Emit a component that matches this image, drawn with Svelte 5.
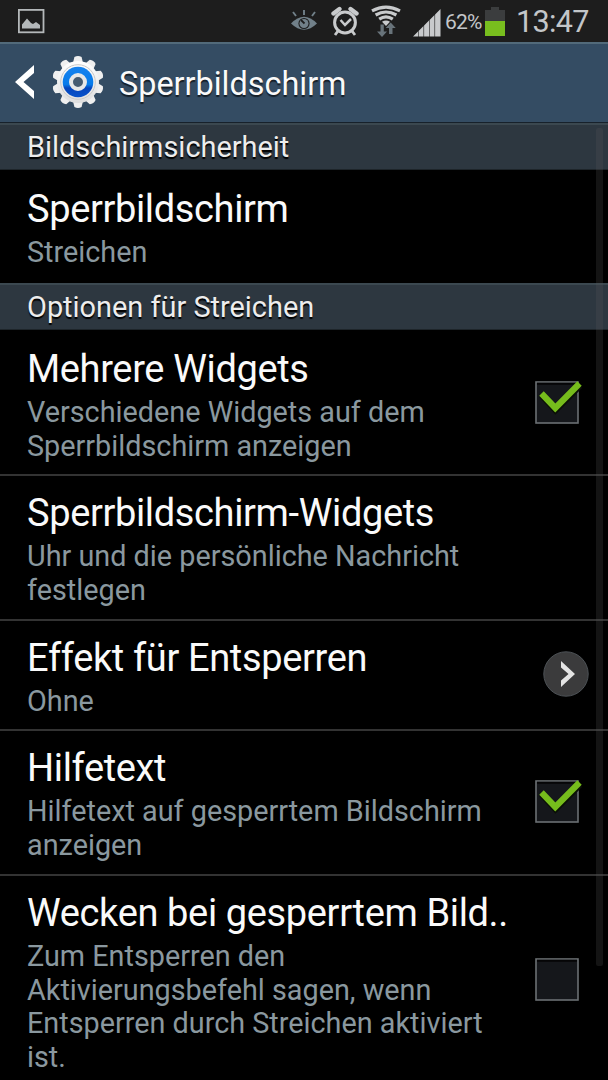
<script>
  const groups = [
    {
      title: "Bildschirmsicherheit",
      items: [{ title: "Sperrbildschirm", summary: "Streichen" }],
    },
    {
      title: "Optionen für Streichen",
      items: [
        {
          title: "Mehrere Widgets",
          summary: "Verschiedene Widgets auf dem\nSperrbildschirm anzeigen",
          control: "checkbox",
          checked: true,
        },
        {
          title: "Sperrbildschirm-Widgets",
          summary: "Uhr und die persönliche Nachricht\nfestlegen",
        },
        { title: "Effekt für Entsperren", summary: "Ohne", control: "more" },
        {
          title: "Hilfetext",
          summary: "Hilfetext auf gesperrtem Bildschirm\nanzeigen",
          control: "checkbox",
          checked: true,
        },
        {
          title: "Wecken bei gesperrtem Bild..",
          summary:
            "Zum Entsperren den\nAktivierungsbefehl sagen, wenn\nEntsperren durch Streichen aktiviert\nist.",
          control: "checkbox",
          checked: false,
        },
      ],
    },
  ];

  const teeth = Array.from({ length: 10 }, (_, i) => i * 36);
</script>

<div class="screen">
  <header class="status-bar">
    <svg class="picture" width="28" height="26" viewBox="0 0 28 26">
      <rect x="1.900" y="1.900" width="24.600" height="22.400" fill="none" stroke="#b4b8ba" stroke-width="1.800" />
      <path d="M5 20.500v-4l5-6 4 4.500 2 1 3-2 4 3v3.500z" fill="#b4b8ba" />
    </svg>

    <div class="status-icons">
      <svg width="28" height="24" viewBox="0 0 28 24">
        <path d="M1 14.500Q14 1 27 14.500Q14 27 1 14.500z" fill="#718089" />
        <circle cx="14" cy="14.500" r="5.600" fill="#1d1d1d" />
        <circle cx="14" cy="14.500" r="4.500" fill="#718089" />
        <path d="M11 11l3.500 3.500" stroke="#1d1d1d" stroke-width="1.800" />
        <path d="M14 1v5M3 3l3 4M25 3l-3 4" stroke="#718089" stroke-width="1.900" />
      </svg>
      <svg width="28" height="30" viewBox="0 0 28 30">
        <circle cx="14" cy="16.500" r="10.400" fill="none" stroke="#c8cacc" stroke-width="3" />
        <path d="M9.500 14l4.500 5 6-6" fill="none" stroke="#c8cacc" stroke-width="2.500" />
        <path d="M2.500 7.500l6-4.500M25.500 7.500L19.500 3" stroke="#c8cacc" stroke-width="4.400" stroke-linecap="round" />
        <path d="M7 25l-3 4M21 25l3 4" stroke="#c8cacc" stroke-width="2.800" />
      </svg>
      <svg class="wifi" width="30" height="32" viewBox="0 0 30 32">
        <path d="M9.500 19.500h3.300v7H16l-5 5.500-5-5.500h3.500z" fill="#68737a" />
        <path d="M18 29h3.500v-6h3.200l-5-5.500-5 5.500H18z" fill="#68737a" />
        <g fill="none" stroke="#c8cacc" stroke-width="3.200">
          <path d="M1 5.800Q15-1.600 29 5.800" />
          <path d="M4.600 10Q15 4 25.400 10" />
          <path d="M8.200 14.200Q15 9.600 21.800 14.200" />
        </g>
        <path d="M11 16.800q4-2.800 8 0l-4 4.200z" fill="#c8cacc" />
      </svg>
      <svg class="signal" width="28" height="28" viewBox="0 0 28 28">
        <path
          d="M0 27.500L5 22.500V27.500zM5.600 21.900L10.500 17V27.500H5.600zM11.100 16.400L16 11.500V27.500H11.100zM16.600 10.900L21.500 6V27.500H16.600zM22.100 5.400L27.500 0V27.500H22.100z"
          fill="#c8cacc"
        />
      </svg>
      <span class="percent">62%</span>
      <svg class="battery" width="20" height="29" viewBox="0 0 20 29">
        <path d="M0 3h6V0h8v3h6v26H0z" fill="#3b3d3e" />
        <path d="M0 14h20v15H0z" fill="#78be1e" />
      </svg>
      <span class="clock">13:47</span>
    </div>
  </header>

  <nav class="action-bar">
    <svg class="back" width="20" height="34" viewBox="0 0 20 34">
      <path d="M19 0v8L8.500 17 19 26v8L0 17z" fill="#fff" />
    </svg>
    <svg class="gear" width="54" height="54" viewBox="-27 -27 54 54">
      <defs>
        <linearGradient id="metal" x1="0" y1="0" x2="0" y2="1">
          <stop offset="0" stop-color="#fff" />
          <stop offset="1" stop-color="#dedede" />
        </linearGradient>
        <linearGradient id="blue" x1="0" y1="0" x2="0" y2="1">
          <stop offset="0" stop-color="#1682ee" />
          <stop offset="0.580" stop-color="#077bea" />
          <stop offset="0.700" stop-color="#0646bd" />
          <stop offset="1" stop-color="#0752cb" />
        </linearGradient>
      </defs>
      {#each teeth as angle}
        <path d="M-5-19L-3.600-25Q0-27 3.600-25L5-19z" fill="#efefef" transform={`rotate(${angle})`} />
      {/each}
      <circle r="21" fill="url(#metal)" />
      <circle r="17.300" fill="none" stroke="#c9c9c9" stroke-width="1" />
      <circle r="15.300" fill="url(#blue)" />
      <circle r="7" fill="#465b70" stroke="#e7e7e7" stroke-width="4" />
    </svg>
    <h1>Sperrbildschirm</h1>
  </nav>

  <main>
    {#each groups as group}
      <section>
        <h2>{group.title}</h2>
        <ul>
          {#each group.items as item}
            <li class="row">
              <div class="text">
                <div class="title">{item.title}</div>
                <div class="summary">{item.summary}</div>
              </div>

              {#if item.control === "checkbox"}
                <svg class="checkbox" width="48" height="48" viewBox="0 0 48 48">
                  <rect x="1" y="5" width="42" height="41" fill="#15171b" stroke="#6b7073" stroke-width="1.600" />
                  <path d="M2 6.700h40" stroke="#050506" stroke-width="2" />
                  {#if item.checked}
                    <path d="M6.500 18.500L20.500 33.500 45 9" fill="none" stroke="#0a1005" stroke-width="6" />
                    <path d="M6.500 16.500L20.300 31 44.500 6.500" fill="none" stroke="#76bc1c" stroke-width="6.200" />
                  {/if}
                </svg>
              {:else if item.control === "more"}
                <svg class="more" width="46" height="46" viewBox="0 0 46 46">
                  <circle cx="23" cy="23" r="22.200" fill="#3b3b3c" stroke="#4d5256" stroke-width="1" />
                  <path d="M18 10v6.500L25.500 23 18 29.500V36L32 23z" fill="#e4e4e4" />
                </svg>
              {/if}
            </li>
          {/each}
        </ul>
      </section>
    {/each}
    <div class="scrollbar"></div>
  </main>
</div>

<style>
  :global(body) {
    margin: 0;
    background: #000;
  }

  .screen {
    width: 608px;
    height: 1080px;
    overflow: hidden;
    display: flex;
    flex-direction: column;
    background: #000;
    color: #fafafa;
    font-family: Roboto, "Liberation Sans", sans-serif;
  }

  svg {
    display: block;
    flex-shrink: 0;
  }

  .status-bar {
    height: 42px;
    flex-shrink: 0;
    box-sizing: border-box;
    padding: 0 19px 0 17px;
    display: flex;
    align-items: center;
    justify-content: space-between;
    background: #1d1d1d;
    color: #c3c6c9;
  }

  .status-icons {
    display: flex;
    align-items: center;
    height: 42px;
  }

  .status-icons svg + svg {
    margin-left: 13px;
  }

  .status-icons .wifi {
    margin-left: 12px;
  }

  .status-icons .signal {
    margin-left: 12px;
    margin-top: 4px;
  }

  .percent {
    font-size: 21px;
    width: 36px;
    margin: 2px 4px 0 4px;
    letter-spacing: -0.8px;
  }

  .clock {
    width: 73px;
    margin-left: 11px;
    font-size: 30.6px;
    letter-spacing: -0.7px;
  }

  .action-bar {
    height: 81px;
    flex-shrink: 0;
    box-sizing: border-box;
    padding-left: 15px;
    display: flex;
    align-items: center;
    background: #344c63;
    border-top: 2px solid #526a7a;
    border-bottom: 1px solid #17212b;
  }

  .back,
  .gear {
    margin-bottom: 2px;
  }

  .gear {
    margin-left: 16px;
  }

  h1 {
    margin: 2px 0 0 14px;
    font-size: 32.4px;
    font-weight: 400;
    text-shadow: 0 2px 1px rgba(0, 0, 0, 0.6);
  }

  main {
    position: relative;
    flex: 1;
    min-height: 0;
  }

  h2 {
    box-sizing: border-box;
    height: 47px;
    margin: 0;
    padding-left: 27px;
    border-top: 2px solid #3b4850;
    border-bottom: 1px solid #1e252a;
    background: #2d3740;
    color: #ededed;
    font-size: 28.9px;
    font-weight: 400;
    line-height: 45px;
    text-shadow: 0 2px 1px #000;
  }

  ul {
    margin: 0;
    padding: 0;
    list-style: none;
  }

  .row {
    display: flex;
    align-items: center;
    padding: 12.2px 19px 10.7px 27px;
    border-bottom: 2px solid #333;
  }

  .row:first-child {
    padding-top: 13.8px;
  }

  .row:last-child {
    padding-bottom: 11.4px;
    border-bottom-color: #000;
  }

  .text {
    flex: 1;
    white-space: pre-line;
  }

  .title {
    margin-bottom: 2px;
    font-size: 38px;
    line-height: 50px;
    letter-spacing: -0.36px;
  }

  .summary {
    color: #8a989f;
    font-size: 28.8px;
    line-height: 33.8px;
  }

  .checkbox {
    margin: -6px 6px 0 0;
  }

  .more {
    margin-top: -3px;
  }

  .scrollbar {
    position: absolute;
    top: 5px;
    right: 5px;
    width: 7px;
    height: 838px;
    border-radius: 2px;
    background: rgba(90, 90, 90, 0.22);
  }
</style>
